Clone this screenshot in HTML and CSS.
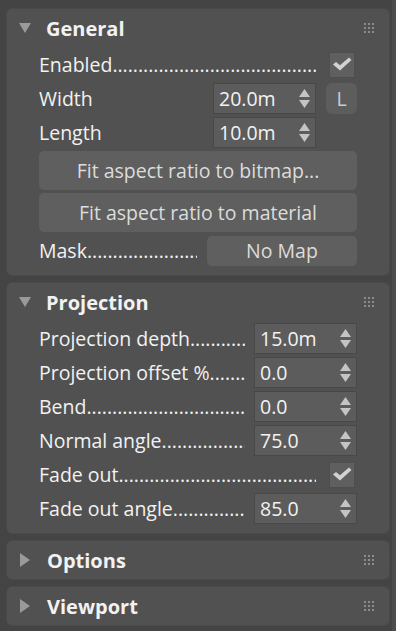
FILE: index.html
```html
<!DOCTYPE html>
<html lang="en">
<head>
    <meta charset="UTF-8">
    <meta name="viewport" content="width=device-width, initial-scale=1.0">
    <title>Decal parameters</title>
    <link rel="stylesheet" href="styles.css">
</head>
<body>
    <div class="page">
        <div class="rollouts">
            <section class="rollout">
                <div class="rollout-head">
                    <span class="tri tri-down"></span>
                    <span class="rollout-title">General</span>
                    <span class="grip"><i></i><i></i><i></i><i></i><i></i><i></i><i></i><i></i><i></i></span>
                </div>
                <div class="rollout-body">
                    <div class="row">
                        <span class="label lead">Enabled</span>
                        <span class="check"><svg width="20" height="14" viewBox="0 0 20 14"><path d="M1 7.5 L4 5 L8 8.3 L17 0.5 L19.5 3 L8 13.5 Z"/></svg></span>
                    </div>
                    <div class="row">
                        <span class="label">Width</span>
                        <span class="spinner"><span class="value">20.0m</span><svg class="arrows" width="11" height="19" viewBox="0 0 11 19"><path d="M5.5 0 L11 8 H0Z M0 11 H11 L5.5 19Z"/></svg></span>
                        <span class="lock">L</span>
                    </div>
                    <div class="row">
                        <span class="label">Length</span>
                        <span class="spinner spinner-solo"><span class="value">10.0m</span><svg class="arrows" width="11" height="19" viewBox="0 0 11 19"><path d="M5.5 0 L11 8 H0Z M0 11 H11 L5.5 19Z"/></svg></span>
                    </div>
                    <button class="btn btn-wide">Fit aspect ratio to bitmap...</button>
                    <button class="btn btn-wide">Fit aspect ratio to material</button>
                    <div class="row">
                        <span class="label lead">Mask</span>
                        <button class="btn btn-map">No Map</button>
                    </div>
                </div>
            </section>

            <section class="rollout">
                <div class="rollout-head">
                    <span class="tri tri-down"></span>
                    <span class="rollout-title">Projection</span>
                    <span class="grip"><i></i><i></i><i></i><i></i><i></i><i></i><i></i><i></i><i></i></span>
                </div>
                <div class="rollout-body">
                    <div class="row">
                        <span class="label lead">Projection depth</span>
                        <span class="spinner spinner-proj"><span class="value">15.0m</span><svg class="arrows" width="11" height="19" viewBox="0 0 11 19"><path d="M5.5 0 L11 8 H0Z M0 11 H11 L5.5 19Z"/></svg></span>
                    </div>
                    <div class="row">
                        <span class="label lead">Projection offset %</span>
                        <span class="spinner spinner-proj"><span class="value">0.0</span><svg class="arrows" width="11" height="19" viewBox="0 0 11 19"><path d="M5.5 0 L11 8 H0Z M0 11 H11 L5.5 19Z"/></svg></span>
                    </div>
                    <div class="row">
                        <span class="label lead">Bend</span>
                        <span class="spinner spinner-proj"><span class="value">0.0</span><svg class="arrows" width="11" height="19" viewBox="0 0 11 19"><path d="M5.5 0 L11 8 H0Z M0 11 H11 L5.5 19Z"/></svg></span>
                    </div>
                    <div class="row">
                        <span class="label lead">Normal angle</span>
                        <span class="spinner spinner-proj"><span class="value">75.0</span><svg class="arrows" width="11" height="19" viewBox="0 0 11 19"><path d="M5.5 0 L11 8 H0Z M0 11 H11 L5.5 19Z"/></svg></span>
                    </div>
                    <div class="row">
                        <span class="label lead">Fade out</span>
                        <span class="check"><svg width="20" height="14" viewBox="0 0 20 14"><path d="M1 7.5 L4 5 L8 8.3 L17 0.5 L19.5 3 L8 13.5 Z"/></svg></span>
                    </div>
                    <div class="row">
                        <span class="label lead">Fade out angle</span>
                        <span class="spinner spinner-proj"><span class="value">85.0</span><svg class="arrows" width="11" height="19" viewBox="0 0 11 19"><path d="M5.5 0 L11 8 H0Z M0 11 H11 L5.5 19Z"/></svg></span>
                    </div>
                </div>
            </section>

            <section class="rollout rollout-closed">
                <div class="rollout-head">
                    <span class="tri tri-right"></span>
                    <span class="rollout-title">Options</span>
                    <span class="grip"><i></i><i></i><i></i><i></i><i></i><i></i><i></i><i></i><i></i></span>
                </div>
            </section>

            <section class="rollout rollout-closed">
                <div class="rollout-head">
                    <span class="tri tri-right"></span>
                    <span class="rollout-title">Viewport</span>
                    <span class="grip"><i></i><i></i><i></i><i></i><i></i><i></i><i></i><i></i><i></i></span>
                </div>
            </section>
        </div>
        <div class="scrollbar"></div>
    </div>
</body>
</html>
```

FILE: styles.css
```css
html, body {
    margin: 0;
    height: 100%;
    background: #444444;
}
body {
    font-family: "Open Sans", "Noto Sans", sans-serif;
    font-size: 19.5px;
    color: #f2f2f2;
    overflow: hidden;
}
.page {
    display: flex;
    height: 100%;
}
.rollouts {
    width: 382px;
    padding: 9px 0 0 7px;
    display: flex;
    flex-direction: column;
    gap: 8px;
}
.scrollbar {
    width: 4px;
    margin-left: 3px;
    background: #4d4d4d;
}
.rollout {
    background: #515151;
    border-radius: 5px;
    box-shadow: 0 0 0 1px #4a4a4a;
    padding-bottom: 9px;
}
.rollout-closed { padding-bottom: 1px; }
.rollout-head {
    height: 37px;
    display: flex;
    align-items: center;
    padding: 0 15px 0 12px;
}
.rollout-title {
    font-weight: 700;
    font-size: 20px;
    margin-left: 15px;
    flex: 1;
    line-height: 1;
    padding-top: 2px;
}
.tri {
    width: 0;
    height: 0;
    border-style: solid;
}
.tri-down {
    border-width: 10px 6.5px 0 6.5px;
    border-color: #9a9a9a transparent transparent transparent;
}
.tri-right {
    border-width: 7px 0 7px 10px;
    border-color: transparent transparent transparent #9a9a9a;
    margin-left: 1px;
    margin-right: 2px;
}
.grip {
    display: grid;
    grid-template-columns: repeat(3, 2px);
    grid-auto-rows: 2px;
    gap: 2px;
    margin-top: 1px;
}
.grip i {
    background: #8c8c8c;
}

.rollout-body {
    display: flex;
    flex-direction: column;
    gap: 3px;
    padding: 3px 32px 0 32px;
}
.row {
    height: 31px;
    display: flex;
    align-items: center;
}
.label {
    flex: 1;
    white-space: nowrap;
    overflow: hidden;
    line-height: 31px;
}
.lead::after {
    content: "....................................................................";
}
.check {
    width: 24px;
    height: 24px;
    border: 1px solid #4e4e4e;
    background: #5f5f5f;
    display: flex;
    align-items: center;
    justify-content: center;
    margin: 0 2px 0 13px;
}
.check svg {
    fill: #d2d2d2;
    margin-top: -1px;
}
.spinner {
    width: 101px;
    height: 29px;
    border: 1px solid #484848;
    background: #5c5c5c;
    display: flex;
    align-items: center;
    padding: 0;
}
.spinner .value {
    flex: 1;
    padding-left: 5px;
    line-height: 29px;
}
.spinner .arrows {
    fill: #c4c4c4;
    margin-right: 5px;
}
.spinner-solo { margin-right: 41px; }
.spinner-proj { margin-left: 9px; }
.lock {
    width: 31px;
    height: 31px;
    margin-left: 10px;
    border-radius: 6px;
    background: #5d5d5d;
    color: #c6cdd4;
    text-align: center;
    line-height: 31px;
}
.btn {
    font-family: inherit;
    font-size: 19.5px;
    color: #dcdcdc;
    background: #5f5f5f;
    border: none;
    border-radius: 5px;
    padding: 0;
    cursor: pointer;
}
.btn-wide {
    height: 39px;
    width: 100%;
}
.btn-map {
    width: 150px;
    height: 30px;
    margin-left: 10px;
}
```
